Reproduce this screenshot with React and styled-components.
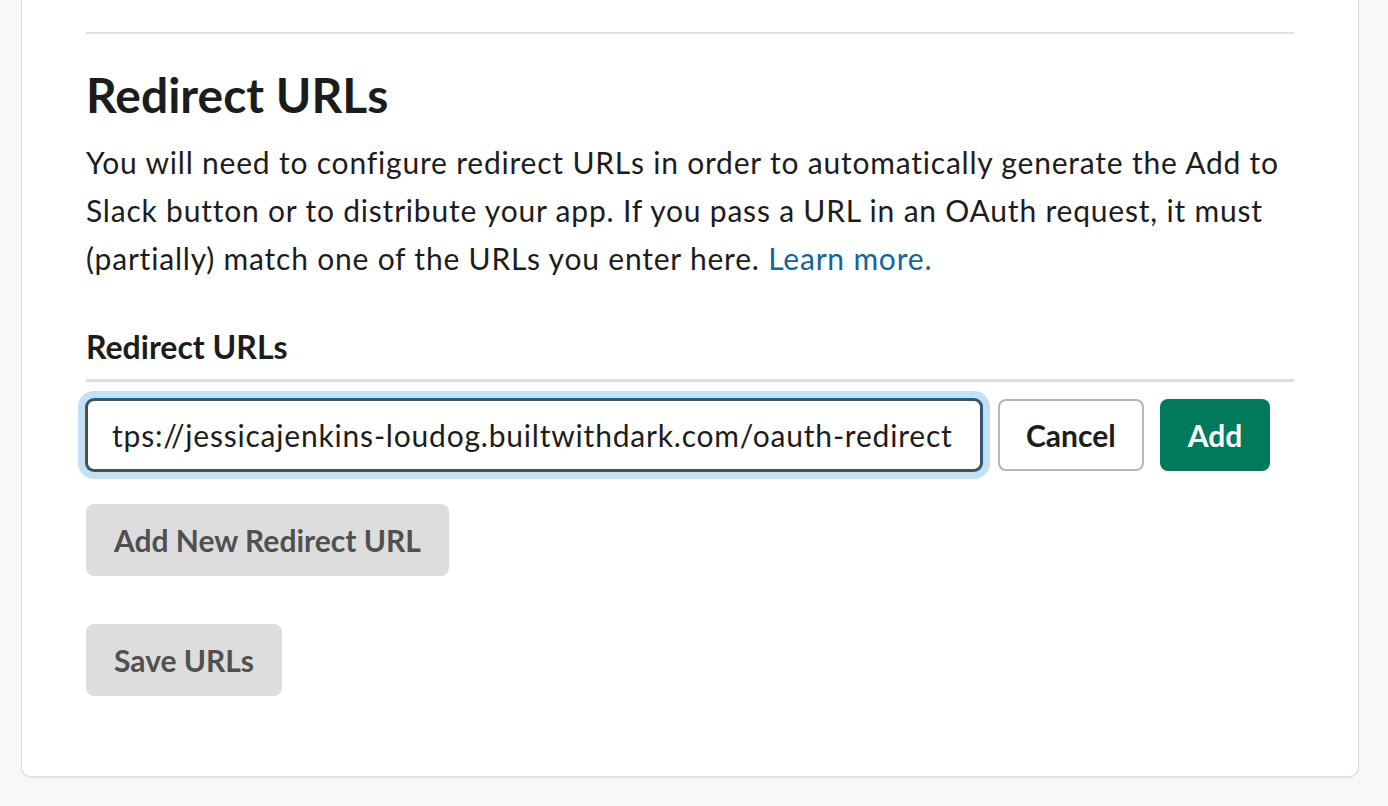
import styled, { createGlobalStyle, css } from "styled-components"

const GlobalStyle = createGlobalStyle`
  html, body {
    margin: 0;
    padding: 0;
    background: #f8f8f8;
  }
  body {
    font-family: Lato, "Noto Sans", "Liberation Sans", sans-serif;
    color: #1d1c1d;
  }
`

const Page = styled.div`
  padding: 0 29px 30px 21px;
`

const Card = styled.section`
  background: #fff;
  border: 1px solid #dddddd;
  border-top: none;
  border-radius: 0 0 10px 10px;
  box-shadow: 0 1px 2px rgba(0, 0, 0, 0.08);
  padding: 32px 64px 80px 64px;
`

const Divider = styled.hr`
  margin: 0;
  border: none;
  border-top: 2px solid #e2e2e2;
`

const Title = styled.h1`
  margin: 32px 0 0 0;
  font-size: 48px;
  line-height: 58px;
  font-weight: 700;
`

const Description = styled.p`
  margin: 14px 0 0 0;
  font-size: 30px;
  line-height: 48px;
  font-weight: 400;
  letter-spacing: 0.8px;
`

const Link = styled.a`
  color: #1264a3;
  text-decoration: none;
`

const FieldLabel = styled.h3`
  margin: 45px 0 0 0;
  font-size: 32px;
  line-height: 40px;
  font-weight: 700;
`

const FieldRule = styled.div`
  height: 3px;
  background: #dddddd;
  margin-top: 12px;
`

const InputRow = styled.div`
  display: flex;
  align-items: center;
  gap: 16px;
  margin-top: 17px;
`

const UrlInput = styled.input`
  box-sizing: border-box;
  width: 896px;
  height: 72px;
  padding: 0 24px;
  font-family: inherit;
  font-size: 30px;
  letter-spacing: 0.8px;
  color: #1d1c1d;
  background: #fff;
  border: 2px solid #4d4d4d;
  border-radius: 8px;
  box-shadow: 0 0 0 1px #1264a3, 0 0 0 8px #c4e1f3;
  outline: none;
`

const Button = styled.button`
  box-sizing: border-box;
  height: 72px;
  padding: 0 28px;
  font-family: inherit;
  font-size: 30px;
  font-weight: 700;
  border-radius: 8px;
  border: none;
  cursor: pointer;

  ${(p) =>
    p.$variant === "outline" &&
    css`
      padding: 0 26px;
      background: #fff;
      color: #1d1c1d;
      border: 2px solid #b5b5b5;
    `}

  ${(p) =>
    p.$variant === "primary" &&
    css`
      background: #007a5a;
      color: #fff;
    `}

  ${(p) =>
    p.$variant === "muted" &&
    css`
      background: #dddddd;
      color: #505050;
    `}
`

const Stack = styled.div`
  display: flex;
  flex-direction: column;
  align-items: flex-start;
  gap: 48px;
  margin-top: 33px;
`

export default function App() {
  return (
    <>
      <GlobalStyle />
      <Page>
        <Card>
          <Divider />
          <Title>Redirect URLs</Title>
          <Description>
            You will need to configure redirect URLs in order to automatically
            generate the Add to Slack button or to distribute your app. If you
            pass a URL in an OAuth request, it must (partially) match one of the
            URLs you enter here. <Link href="#">Learn more.</Link>
          </Description>

          <FieldLabel>Redirect URLs</FieldLabel>
          <FieldRule />
          <InputRow>
            <UrlInput
              type="text"
              readOnly
              value="tps://jessicajenkins-loudog.builtwithdark.com/oauth-redirect"
            />
            <Button $variant="outline">Cancel</Button>
            <Button $variant="primary">Add</Button>
          </InputRow>

          <Stack>
            <Button $variant="muted">Add New Redirect URL</Button>
            <Button $variant="muted">Save URLs</Button>
          </Stack>
        </Card>
      </Page>
    </>
  )
}
